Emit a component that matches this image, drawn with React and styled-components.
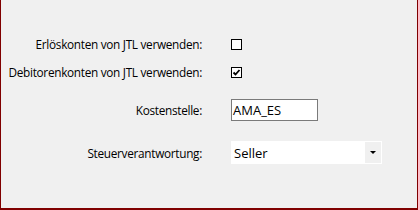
import React from "react";
import styled, { createGlobalStyle } from "styled-components";

const GlobalStyle = createGlobalStyle`
  html, body {
    margin: 0;
    padding: 0;
    background: #f0f0f0;
  }
  body {
    font-family: "Open Sans", "Liberation Sans", sans-serif;
    font-size: 12px;
    color: #000;
  }
`;

// --- Components --- //

const CheckBox = ({ checked }) => (
  <StyledCheck>
    {checked && (
      <svg width="9" height="9" viewBox="0 0 9 9">
        <path
          d="M1.5 4.5 L3.5 6.5 L7.5 2"
          fill="none"
          stroke="#000"
          strokeWidth="1.8"
        />
      </svg>
    )}
  </StyledCheck>
);

const App = () => {
  return (
    <>
      <GlobalStyle />
      <StyledFrame>
        <StyledRow $height={20} $top={34}>
          <StyledLabel>Erlöskonten von JTL verwenden:</StyledLabel>
          <CheckBox />
        </StyledRow>
        <StyledRow $height={20} $top={8}>
          <StyledLabel>Debitorenkonten von JTL verwenden:</StyledLabel>
          <CheckBox checked />
        </StyledRow>
        <StyledRow $height={22} $top={17}>
          <StyledLabel>Kostenstelle:</StyledLabel>
          <StyledInput>AMA_ES</StyledInput>
        </StyledRow>
        <StyledRow $height={23} $top={20}>
          <StyledLabel>Steuerverantwortung:</StyledLabel>
          <StyledSelect>
            <span className="value">Seller</span>
            <span className="button">
              <svg width="6" height="4" viewBox="0 0 6 4">
                <path d="M0 0 H6 L3 3 Z" fill="#000" />
              </svg>
            </span>
          </StyledSelect>
        </StyledRow>
      </StyledFrame>
    </>
  );
};

export default App;

// --- Styles --- //

const StyledFrame = styled.div`
  width: 418px;
  height: 210px;
  box-sizing: border-box;
  border: solid #800000;
  border-width: 0 1px 2px 1px;
  display: flex;
  flex-direction: column;
`;

const StyledRow = styled.div`
  display: flex;
  align-items: center;
  height: ${(props) => props.$height}px;
  margin-top: ${(props) => props.$top}px;
  gap: 29px;
`;

const StyledLabel = styled.div`
  width: 201px;
  text-align: right;
  white-space: nowrap;
  font-size: 11.8px;
  letter-spacing: -0.3px;
`;

const StyledCheck = styled.div`
  width: 11px;
  height: 11px;
  box-sizing: border-box;
  border: 1px solid #000;
  background: #fff;
  display: flex;
  align-items: center;
  justify-content: center;
`;

const StyledInput = styled.div`
  width: 87px;
  height: 22px;
  box-sizing: border-box;
  border: 1px solid #7a7a7a;
  background: #fff;
  display: flex;
  align-items: center;
  padding-left: 1px;
  font-size: 13px;
`;

const StyledSelect = styled.div`
  width: 151px;
  height: 23px;
  box-sizing: border-box;
  background: #fff;
  display: flex;
  align-items: stretch;
  .value {
    flex: 1;
    display: flex;
    align-items: center;
    padding-left: 3px;
    font-size: 13px;
  }
  .button {
    width: 16px;
    margin: 1px;
    background: #f0f0f0;
    display: flex;
    align-items: center;
    justify-content: center;
  }
`;
